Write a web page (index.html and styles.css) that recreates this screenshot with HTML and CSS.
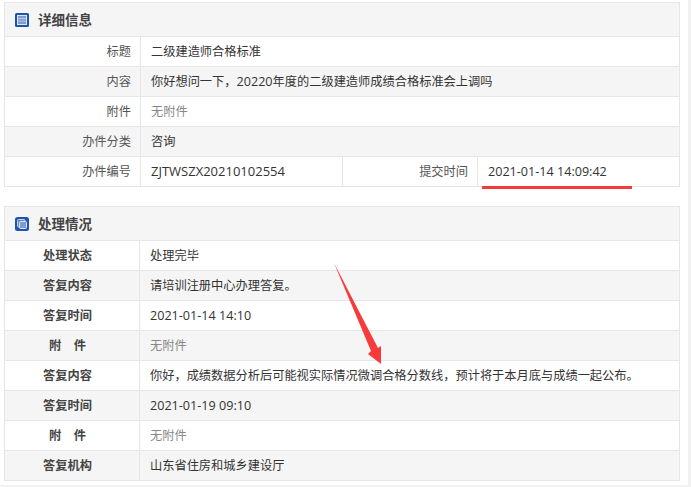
FILE: index.html
```html
<!DOCTYPE html>
<html lang="zh-CN">
<head>
<meta charset="utf-8">
<title>详细信息</title>
<link rel="stylesheet" href="styles.css">
</head>
<body>
<div class="page">
  <section class="panel">
    <header class="panel-head">
      <svg class="icon" viewBox="0 0 14 14" width="14" height="14"><rect width="14" height="14" rx="1.5" fill="#1a55ae"/><rect x="2" y="2" width="10" height="10" fill="#dfe7f4"/><rect x="3" y="3" width="8" height="8" fill="#7f9bcf"/><path d="M3 5.5h8M3 8h8" stroke="#b7c7e4" stroke-width="1"/></svg>
      <h2>详细信息</h2>
    </header>
    <div class="row info"><div class="key">标题</div><div class="val">二级建造师合格标准</div></div>
    <div class="row info alt"><div class="key">内容</div><div class="val">你好想问一下，<span class="num">20220</span>年度的二级建造师成绩合格标准会上调吗</div></div>
    <div class="row info"><div class="key">附件</div><div class="val muted">无附件</div></div>
    <div class="row info alt"><div class="key">办件分类</div><div class="val">咨询</div></div>
    <div class="row info split">
      <div class="key">办件编号</div><div class="val code">ZJTWSZX20210102554</div>
      <div class="key">提交时间</div><div class="val stamp num">2021-01-14 14:09:42<span class="mark"></span></div>
    </div>
  </section>
  <section class="panel second">
    <header class="panel-head">
      <svg class="icon" viewBox="0 0 14 14" width="14" height="14"><rect width="14" height="14" rx="2.5" fill="#1a55ae"/><rect x="2.5" y="2.5" width="7.5" height="7.5" rx="1" fill="#5f82c2" stroke="#c5d3ea"/><rect x="4.5" y="4.5" width="7" height="7" rx="1" fill="#7f9bcf" stroke="#dfe7f4"/></svg>
      <h2>处理情况</h2>
    </header>
    <div class="row handle"><div class="key">处理状态</div><div class="val">处理完毕</div></div>
    <div class="row handle alt"><div class="key">答复内容</div><div class="val">请培训注册中心办理答复。</div></div>
    <div class="row handle"><div class="key">答复时间</div><div class="val num">2021-01-14 14:10</div></div>
    <div class="row handle alt"><div class="key gap">附&nbsp;&nbsp;&nbsp;&nbsp;件</div><div class="val muted">无附件</div></div>
    <div class="row handle"><div class="key">答复内容</div><div class="val">你好，成绩数据分析后可能视实际情况微调合格分数线，预计将于本月底与成绩一起公布。</div></div>
    <div class="row handle alt"><div class="key">答复时间</div><div class="val num">2021-01-19 09:10</div></div>
    <div class="row handle"><div class="key gap">附&nbsp;&nbsp;&nbsp;&nbsp;件</div><div class="val muted">无附件</div></div>
    <div class="row handle alt"><div class="key">答复机构</div><div class="val">山东省住房和城乡建设厅</div></div>
  </section>
  <svg class="arrow" viewBox="0 0 50 102" width="50" height="102"><path d="M0 0 L44 85 L47 83 L47 101 L34 91 L37 88 Z" fill="#f73a3a"/></svg>
</div>
</body>
</html>
```
FILE: styles.css
```css
* { box-sizing: border-box; margin: 0; padding: 0; }
html, body { height: 100%; overflow: hidden; }
body {
  background: #f1f1f1;
  font-family: "Noto Sans CJK SC", sans-serif;
  font-size: 12.22px;
  color: #333;
}
.page {
  position: relative;
  width: 688px;
  height: 485px;
  background: #fff;
  padding: 2px 8px 0 4px;
}
.panel { border: 1px solid #e6e6e6; border-bottom-width: 0; }
.second { margin-top: 19px; }
.panel-head {
  height: 34px;
  background: #f5f5f5;
  border-bottom: 1px solid #e6e6e6;
  display: flex;
  align-items: center;
  padding-left: 10px;
  gap: 9px;
}
.icon { flex: none; }
h2 { font-size: 13.5px; font-weight: 700; color: #444; line-height: 30px; height: 32px; }
.row {
  height: 30px;
  display: grid;
  border-bottom: 1px solid #e6e6e6;
  align-items: stretch;
  line-height: 28px;
}
.info { grid-template-columns: 136px 1fr; }
.split { grid-template-columns: 136px 202px 135px 1fr; }
.handle { grid-template-columns: 135px 1fr; }
.alt { background: #f5f5f5; }
.key { border-right: 1px solid #e6e6e6; }
.info .key { text-align: right; padding-right: 9px; color: #555; }
.handle .key { text-align: center; padding-right: 9px; font-weight: 700; color: #444; }
.gap { word-spacing: 0.4px; }
.val { padding-left: 10px; white-space: nowrap; }
.split .val:nth-child(2) { border-right: 1px solid #e6e6e6; }
.num { font-family: "Open Sans", "Noto Sans CJK SC", sans-serif; font-size: 12.6px; }
.code { font-family: "Open Sans", "Noto Sans CJK SC", sans-serif; font-size: 13px; }
.val.num, .val.code { line-height: 29px; }
.muted { color: #888; }
.stamp { position: relative; }
.mark {
  position: absolute;
  left: 4px;
  bottom: -3px;
  width: 150px;
  height: 3px;
  background: #f73a3a;
}
.arrow { position: absolute; left: 334px; top: 263px; }
```
